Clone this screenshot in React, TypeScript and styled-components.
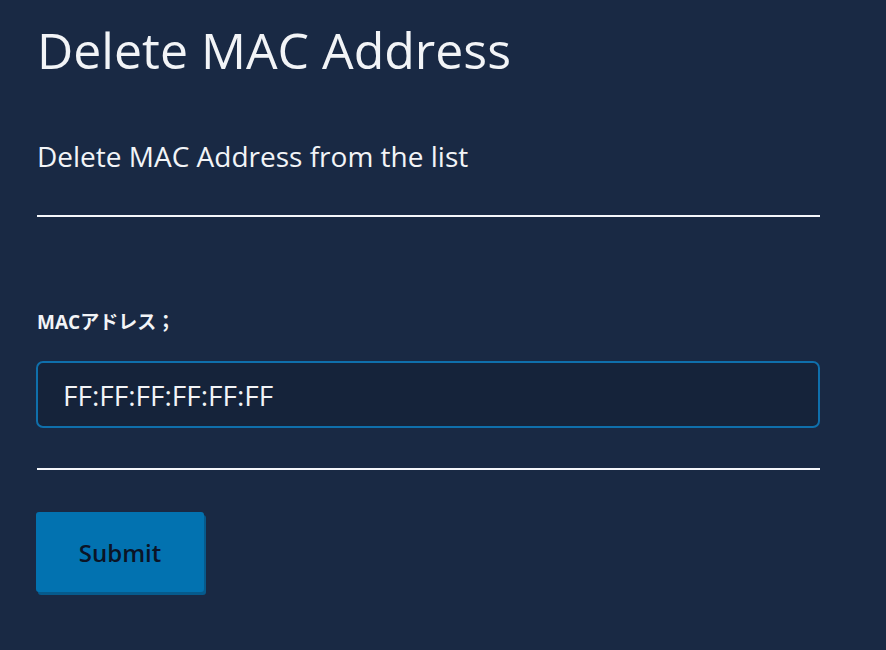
import * as React from 'react';
import styled, { createGlobalStyle } from 'styled-components';

const GlobalStyle = createGlobalStyle`
  html, body {
    margin: 0;
    padding: 0;
    background: #192944;
  }
  body {
    font-family: 'Open Sans', 'Noto Sans CJK JP', sans-serif;
    color: #f2f4f7;
  }
`;

const Page = styled.div`
  padding: 18px 66px 40px 36px;
  max-width: 784px;
`;

const Title = styled.h1`
  margin: 0 0 0 1px;
  font-size: 50px;
  font-weight: 400;
  line-height: 64px;
`;

const Subtitle = styled.p`
  margin: 57px 0 0 1px;
  font-size: 28px;
  line-height: 34px;
`;

const Rule = styled.hr<{ $top: number }>`
  margin: ${(p) => p.$top}px 0 0 1px;
  border: none;
  border-top: 2px solid #f4f6fa;
  width: 783px;
`;

const Label = styled.label`
  display: block;
  margin: 94px 0 0 1px;
  font-size: 19px;
  font-weight: 700;
  line-height: 22px;
`;

const Input = styled.input`
  display: block;
  box-sizing: border-box;
  margin-top: 28px;
  width: 784px;
  height: 67px;
  padding: 0 25px;
  background: #15233a;
  border: 2px solid #0f6fab;
  border-radius: 7px;
  color: #f2f4f7;
  font-family: 'Open Sans', sans-serif;
  font-size: 28px;
  outline: none;
`;

const Button = styled.button`
  display: block;
  margin-top: 42px;
  width: 168px;
  height: 80px;
  border: none;
  border-radius: 3px;
  background: #0272b0;
  box-shadow: 2px 3px 0 #065a8c;
  color: #0b1426;
  font-family: 'Open Sans', sans-serif;
  font-size: 24px;
  font-weight: 600;
  cursor: pointer;
`;

export default function App() {
  return (
    <>
      <GlobalStyle />
      <Page>
        <Title>Delete MAC Address</Title>
        <Subtitle>Delete MAC Address from the list</Subtitle>
        <Rule $top={42} />
        <Label htmlFor="mac">MACアドレス；</Label>
        <Input id="mac" defaultValue="FF:FF:FF:FF:FF:FF" />
        <Rule $top={40} />
        <Button type="button">Submit</Button>
      </Page>
    </>
  );
}
